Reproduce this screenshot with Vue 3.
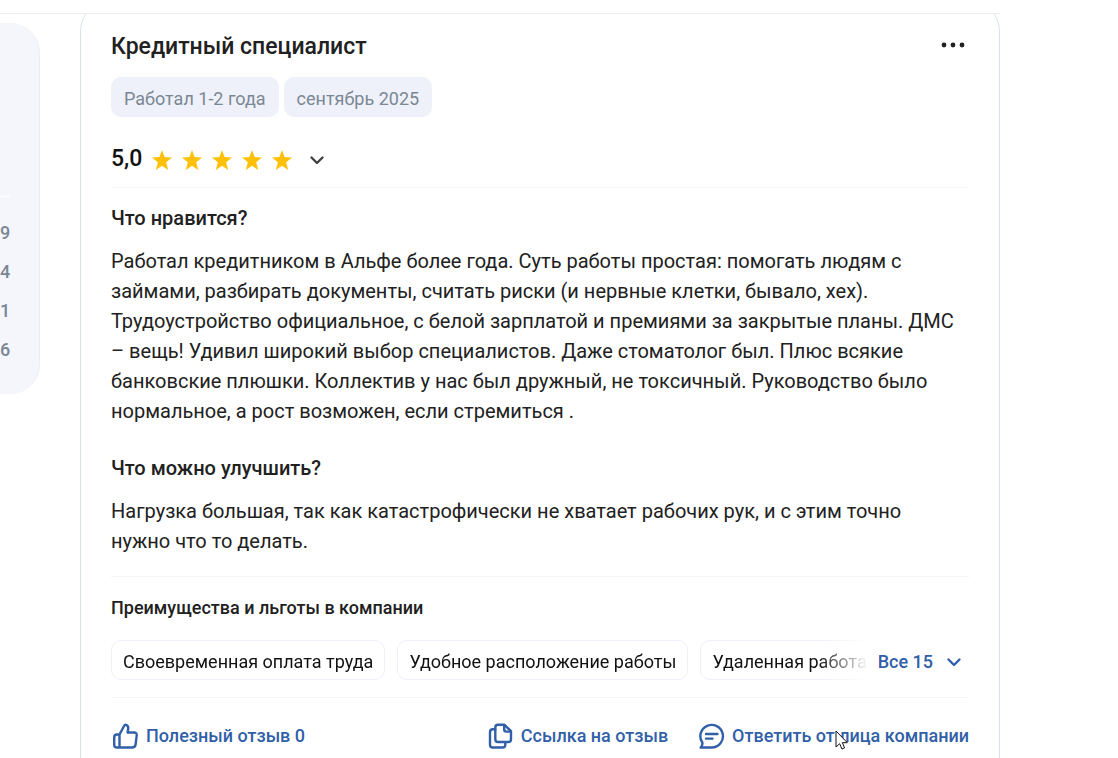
<script setup>
const counts = [9, 4, 1, 6]
const tags = ['Работал 1-2 года', 'сентябрь 2025']
const benefits = ['Своевременная оплата труда', 'Удобное расположение работы', 'Удаленная работа']
</script>

<template>
  <div class="page">
    <header class="topline"></header>
    <main class="columns">
      <aside class="summary">
        <hr class="summary-rule">
        <ul class="counts">
          <li v-for="count in counts" :key="count">{{ count }}</li>
        </ul>
      </aside>

      <article class="card">
        <div class="head">
          <h2 class="title">Кредитный специалист</h2>
          <button class="icon-button" type="button" aria-label="Меню">
            <svg width="24" height="26" viewBox="0 0 24 26" fill="#212121">
              <circle cx="3" cy="13" r="2.4" />
              <circle cx="12" cy="13" r="2.4" />
              <circle cx="21" cy="13" r="2.4" />
            </svg>
          </button>
        </div>

        <div class="tags">
          <span v-for="tag in tags" :key="tag" class="tag">{{ tag }}</span>
        </div>

        <div class="rating">
          <span class="score">5,0</span>
          <div class="scale">
            <div class="stars">
              <svg v-for="n in 5" :key="n" width="20" height="20" viewBox="0 0 20 20" fill="#ffc107">
                <path d="M10 0L12.6 7L20 7.5L14.2 12.3L16.2 20L10 15.8L3.8 20L5.8 12.3L0 7.5L7.4 7Z" />
              </svg>
            </div>
            <button class="icon-button" type="button" aria-label="Подробнее об оценке">
              <svg width="16" height="16" viewBox="0 0 16 16" fill="none" stroke="#424242" stroke-width="2.4" stroke-linecap="round" stroke-linejoin="round">
                <path d="M2.5 5.5L8 11L13.5 5.5" />
              </svg>
            </button>
          </div>
        </div>

        <section class="block">
          <h3 class="subtitle">Что нравится?</h3>
          <p class="text">Работал кредитником в Альфе более года. Суть работы простая: помогать людям с займами, разбирать документы, считать риски (и нервные клетки, бывало, хех). Трудоустройство официальное, с белой зарплатой и премиями за закрытые планы. ДМС – вещь! Удивил широкий выбор специалистов. Даже стоматолог был. Плюс всякие банковские плюшки. Коллектив у нас был дружный, не токсичный. Руководство было нормальное, а рост возможен, если стремиться .</p>
          <h3 class="subtitle second">Что можно улучшить?</h3>
          <p class="text">Нагрузка большая, так как катастрофически не хватает рабочих рук, и с этим точно нужно что то делать.</p>
        </section>

        <section class="block benefits">
          <h4 class="small-title">Преимущества и льготы в компании</h4>
          <div class="benefit-row">
            <div class="benefit-list">
              <span v-for="benefit in benefits" :key="benefit" class="benefit">{{ benefit }}</span>
            </div>
            <button class="link-button all" type="button">
              Все 15
              <svg width="16" height="16" viewBox="0 0 16 16" fill="none" stroke="currentColor" stroke-width="2.4" stroke-linecap="round" stroke-linejoin="round">
                <path d="M2.5 5.5L8 11L13.5 5.5" />
              </svg>
            </button>
          </div>
        </section>

        <footer class="block actions">
          <button class="link-button like" type="button">
            <svg width="28" height="28" viewBox="0 0 28 28" fill="none" stroke="currentColor" stroke-width="2.4" stroke-linecap="round" stroke-linejoin="round">
              <path d="M8.5 12.5L13.2 3.7Q13.8 2.5 15 2.9Q17.7 3.8 17.2 7L16.6 10.5H23Q26 10.5 25.7 13.5L24.6 22.5Q24.2 25.5 21 25.5H6Q3.2 25.5 3.2 22.7V15.3Q3.2 12.5 6 12.5H8.5V25.5" />
            </svg>
            Полезный отзыв 0
          </button>
          <button class="link-button" type="button">
            <svg width="28" height="28" viewBox="0 0 28 28" fill="none" stroke="currentColor" stroke-width="2.4" stroke-linejoin="round" stroke-linecap="round">
              <path d="M12 2.8H18.5L25 9.2V17.3Q25 20 22.3 20H12Q9.3 20 9.3 17.3V5.5Q9.3 2.8 12 2.8Z" />
              <path d="M18.2 3.2V7.6Q18.2 9.6 20.2 9.6H24.6M9.3 7.3H6.8Q4 7.3 4 10V22.7Q4 25.5 6.8 25.5H16.5Q19.3 25.5 19.3 22.7V20.5" />
            </svg>
            Ссылка на отзыв
          </button>
          <button class="link-button" type="button">
            <svg width="28" height="28" viewBox="0 0 28 28" fill="none" stroke="currentColor" stroke-width="2.4" stroke-linejoin="round" stroke-linecap="round">
              <path d="M5.4 20.7A11.3 11.3 0 1 1 14.8 25.5H3.6Q5.8 23.4 5.4 20.7Z" />
              <path d="M9 12H20.5M9 16.6H15.5" />
            </svg>
            <span class="reply">
              Ответить от лица компании
              <svg class="pointer" width="13" height="20" viewBox="0 0 13 20" fill="#fff" stroke="#111" stroke-width="1">
                <path d="M1 1V17L4.6 13.7L7 19L9.6 17.8L7.3 12.7H12.3Z" />
              </svg>
            </span>
          </button>
        </footer>
      </article>
    </main>
  </div>
</template>

<style>
body {
  margin: 0;
  background: #fff;
}
</style>

<style scoped>
* {
  box-sizing: border-box;
}
.page {
  height: 100vh;
  padding-right: 118px;
  overflow: hidden;
  font-family: Roboto, "Liberation Sans", sans-serif;
  font-size: 18px;
  color: #212121;
}
.topline {
  height: 14px;
  border-bottom: 1px solid #ecedf1;
}
.columns {
  display: flex;
  align-items: flex-start;
  gap: 40px;
  overflow: hidden;
}
.summary {
  flex: none;
  width: 40px;
  margin-top: 9px;
  padding: 173px 29px 25px 0;
  border-right: 1px solid #ececf2;
  border-radius: 0 30px 30px 0;
  background: #f5f6fb;
}
.summary-rule {
  height: 1px;
  margin: 0 0 16px;
  border: 0;
  background: #fff;
}
.counts {
  display: flex;
  flex-direction: column;
  margin: 0;
  padding: 0;
  list-style: none;
  color: #7b8794;
  font-weight: 500;
  line-height: 39px;
}
.card {
  flex: 1;
  min-width: 0;
  margin-top: -13px;
  padding: 30px 30px 60px;
  border: 1px solid #dbe1ec;
  border-radius: 30px;
}
.head {
  display: flex;
  justify-content: space-between;
  align-items: flex-start;
  padding-right: 4px;
}
.title {
  margin: 0;
  font-size: 23px;
  font-weight: 500;
  line-height: 30px;
}
button {
  margin: 0;
  padding: 0;
  border: 0;
  background: none;
  font: inherit;
  cursor: pointer;
}
svg {
  display: block;
  flex: none;
}
.tags {
  display: flex;
  gap: 5px;
  margin-top: 15px;
}
.tag {
  height: 40px;
  padding: 0 13px;
  border-radius: 10px;
  background: #eef1f9;
  color: #7b8794;
  line-height: 44px;
}
.rating {
  display: flex;
  align-items: center;
  gap: 10px;
  height: 30px;
  margin-top: 27px;
}
.score {
  font-size: 23px;
  font-weight: 500;
  line-height: 30px;
  color: #111;
}
.scale {
  display: flex;
  align-items: center;
  gap: 17px;
  padding-top: 2px;
}
.stars {
  display: flex;
  gap: 10px;
}
.block {
  margin-top: 13px;
  border-top: 1px solid #f3f4f6;
}
.subtitle {
  margin: 15px 0 13px;
  font-size: 20px;
  font-weight: 500;
  line-height: 30px;
}
.second {
  margin-top: 27px;
}
.text {
  margin: 0;
  padding-right: 8px;
  font-size: 20px;
  line-height: 30px;
}
.benefits {
  margin-top: 20px;
}
.small-title {
  margin: 16px 0 17px;
  font-size: 18px;
  font-weight: 500;
  line-height: 30px;
}
.benefit-row {
  display: flex;
  align-items: center;
  gap: 10px;
  padding-right: 7px;
}
.benefit-list {
  display: flex;
  flex: 1;
  min-width: 0;
  gap: 12px;
  overflow: hidden;
  mask-image: linear-gradient(to left, transparent, #000 50px);
}
.benefit {
  flex: none;
  height: 40px;
  padding: 0 11px;
  border: 1px solid #eeeff8;
  border-radius: 10px;
  color: #111;
  line-height: 42px;
  white-space: nowrap;
}
.link-button {
  display: flex;
  align-items: center;
  gap: 7px;
  color: #315fa8;
  font-weight: 500;
  line-height: 28px;
  white-space: nowrap;
}
.all {
  gap: 13px;
  padding-top: 4px;
}
.actions {
  display: flex;
  gap: 29px;
  margin-top: 17px;
  padding-top: 24px;
}
.like {
  margin-right: auto;
}
.reply {
  position: relative;
}
.pointer {
  position: absolute;
  top: 8px;
  left: 103px;
}
</style>
